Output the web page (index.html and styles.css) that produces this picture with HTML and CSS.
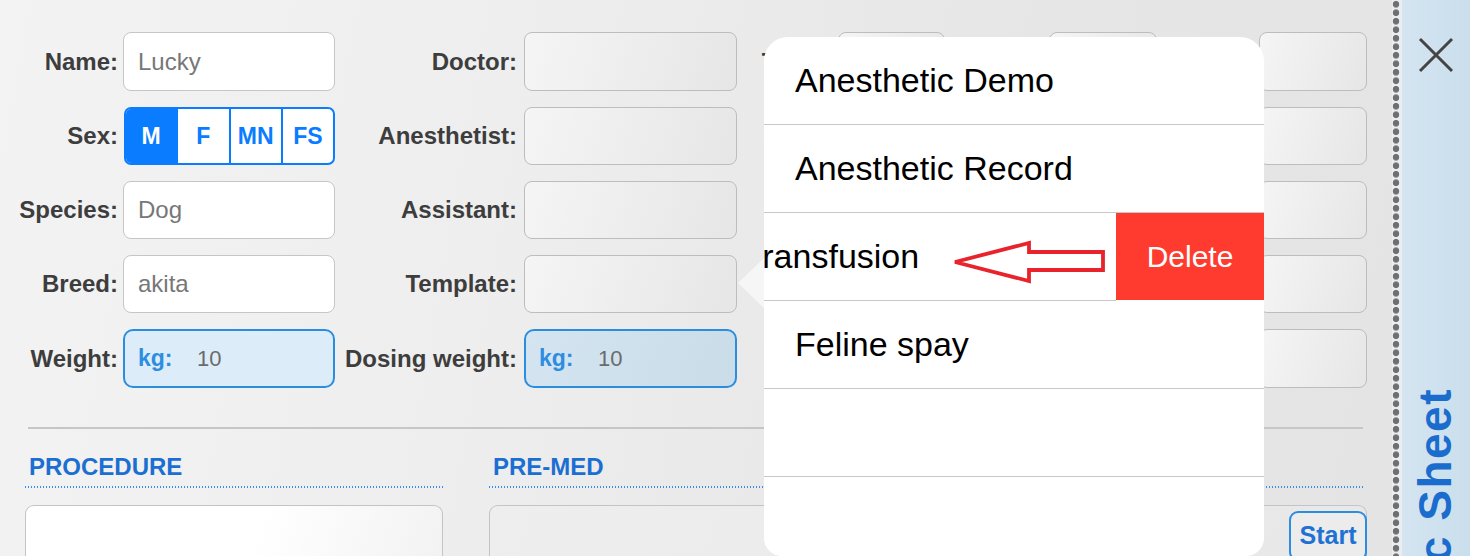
FILE: index.html
```html
<!DOCTYPE html>
<html lang="en">
<head>
<meta charset="utf-8">
<title>Anesthetic Sheet</title>
<link rel="stylesheet" href="styles.css">
</head>
<body>
<div class="app">
  <main class="sheet">
    <section class="form-grid">
      <div class="lbl c1">Name:</div>
      <div class="field white">Lucky</div>
      <div class="lbl c2">Doctor:</div>
      <div class="field gray"></div>
      <div class="lbl c3">Temp:</div>
      <div class="field gray"></div>
      <div class="lbl c4"></div>
      <div class="field gray"></div>
      <div class="lbl c5"></div>
      <div class="field gray"></div>

      <div class="lbl c1">Sex:</div>
      <div class="seg"><span class="on">M</span><span>F</span><span>MN</span><span>FS</span></div>
      <div class="lbl c2">Anesthetist:</div>
      <div class="field gray"></div>
      <div class="lbl c3"></div>
      <div class="field gray"></div>
      <div class="lbl c4"></div>
      <div class="field gray"></div>
      <div class="lbl c5"></div>
      <div class="field gray"></div>

      <div class="lbl c1">Species:</div>
      <div class="field white">Dog</div>
      <div class="lbl c2">Assistant:</div>
      <div class="field gray"></div>
      <div class="lbl c3"></div>
      <div class="field gray"></div>
      <div class="lbl c4"></div>
      <div class="field gray"></div>
      <div class="lbl c5"></div>
      <div class="field gray"></div>

      <div class="lbl c1">Breed:</div>
      <div class="field white">akita</div>
      <div class="lbl c2">Template:</div>
      <div class="field gray"></div>
      <div class="lbl c3"></div>
      <div class="field gray"></div>
      <div class="lbl c4"></div>
      <div class="field gray"></div>
      <div class="lbl c5"></div>
      <div class="field gray"></div>

      <div class="lbl c1">Weight:</div>
      <div class="field kg"><span class="unit">kg:</span><span class="val">10</span></div>
      <div class="lbl c2">Dosing weight:</div>
      <div class="field kg dose"><span class="unit">kg:</span><span class="val">10</span></div>
      <div class="lbl c3"></div>
      <div class="field gray"></div>
      <div class="lbl c4"></div>
      <div class="field gray"></div>
      <div class="lbl c5"></div>
      <div class="field gray"></div>
    </section>

    <hr class="divider">

    <section class="lower">
      <div class="panel procedure">
        <h2 class="panel-title">PROCEDURE</h2>
        <div class="box box-white"></div>
      </div>
      <div class="panel premed">
        <h2 class="panel-title">PRE-MED</h2>
        <div class="box box-gray"><button class="start">Start</button></div>
      </div>
    </section>
  </main>

  <aside class="sidebar">
    <div class="dots"></div>
    <div class="tab-content">
      <svg class="close" width="36" height="36" viewBox="0 0 36 36" aria-label="Close">
        <path d="M2 2 L34 34 M34 2 L2 34" stroke="#444" stroke-width="3" fill="none"/>
      </svg>
      <div class="tab-title">Anesthetic Sheet</div>
    </div>
  </aside>
</div>

<div class="popover">
  <div class="popover-arrow"></div>
  <div class="popover-list">
    <div class="row">Anesthetic Demo</div>
    <div class="row">Anesthetic Record</div>
    <div class="row swiped">
      <div class="row-content">Blood Transfusion</div>
      <div class="delete-action">Delete</div>
    </div>
    <div class="row">Feline spay</div>
    <div class="row"></div>
    <div class="row"></div>
  </div>
</div>

<svg class="annotation" width="156" height="46" viewBox="0 0 156 46">
  <polygon points="3,22 77,3 77,12 151,12 151,30 77,30 77,41" fill="none" stroke="#e8232b" stroke-width="3.8" stroke-linejoin="miter"/>
</svg>
</body>
</html>
```

FILE: styles.css
```css
* { box-sizing: border-box; }

html {
  margin: 0;
  padding: 0;
  width: 1470px;
  height: 556px;
  overflow: hidden;
}

body {
  margin: 0;
  padding: 0;
  width: 1470px;
  height: 556px;
  overflow: hidden;
  position: relative;
  font-family: "Liberation Sans", Arial, sans-serif;
  background: #ececec;
}

.app {
  display: flex;
  height: 556px;
  overflow: hidden;
}

.sheet {
  width: 1392px;
  flex: none;
  padding-top: 32px;
  overflow: hidden;
  background: linear-gradient(100deg, #f3f3f3 0%, #eeeeee 35%, #e6e6e6 70%, #e4e4e4 100%);
}

/* ---------- form grid ---------- */
.form-grid {
  display: grid;
  grid-template-columns: 123px 212px 189px 213px 101px 107px 104px 108px 102px 108px;
  grid-template-rows: 59px 58px 58px 58px 59px;
  row-gap: 16px;
}

.lbl {
  display: flex;
  align-items: center;
  justify-content: flex-end;
  padding-right: 5px;
  font-size: 24px;
  font-weight: bold;
  color: #3d3d3d;
  white-space: nowrap;
}
.lbl.c2 { padding-right: 7px; }
.lbl.c3, .lbl.c4, .lbl.c5 { padding-right: 6px; }

.field {
  display: flex;
  align-items: center;
  padding-left: 14px;
  border: 1px solid #c6c6c6;
  border-radius: 8px;
  font-size: 24px;
  color: #777777;
}
.field.white { background: #ffffff; }
.field.gray {
  background: linear-gradient(110deg, #f5f5f5 0%, #ececec 60%, #e6e6e6 100%);
  border-color: #bdbdbd;
}
.field.kg {
  background: #dcedf9;
  border: 2px solid #2b8de0;
  border-radius: 10px;
  padding-left: 13px;
}
.field.kg.dose {
  background: linear-gradient(110deg, #d4e5f1 0%, #c9dce8 100%);
}
.unit {
  width: 59px;
  font-size: 23px;
  font-weight: bold;
  color: #2d8ee0;
}
.val {
  font-size: 22px;
  color: #6b6b6b;
}

.seg {
  display: flex;
  border: 2px solid #0a7cff;
  border-radius: 7px;
  overflow: hidden;
  background: #ffffff;
  margin-left: 1px;
}
.seg span {
  flex: 1;
  display: flex;
  align-items: center;
  justify-content: center;
  font-size: 23px;
  font-weight: bold;
  color: #0a7cff;
}
.seg span + span { border-left: 2px solid #0a7cff; }
.seg span.on { background: #0a7cff; color: #ffffff; }

/* ---------- lower section ---------- */
.divider {
  margin: 39px 29px 0 28px;
  height: 2px;
  border: none;
  background: #c6c6c6;
}

.lower {
  display: flex;
  gap: 46px;
  padding-left: 25px;
  padding-right: 25px;
}
.panel { display: flex; flex-direction: column; }
.procedure { width: 418px; }
.premed { flex: 1; }

.panel-title {
  margin: 24px 0 0 0;
  padding: 0 0 7px 4px;
  font-size: 24px;
  line-height: 28px;
  font-weight: bold;
  color: #1b6fd1;
  background-image: linear-gradient(to right, #3a8ce6 1px, transparent 1px);
  background-size: 3px 2px;
  background-repeat: repeat-x;
  background-position: 0 100%;
}
.premed .panel-title { margin-right: 2px; }

.box {
  margin-top: 17px;
  height: 60px;
  border: 1px solid #c4c4c4;
  border-bottom: none;
  border-radius: 9px 9px 0 0;
  display: flex;
  justify-content: flex-end;
  align-items: flex-start;
}
.box-white { background: linear-gradient(110deg, #ffffff 55%, #f2f2f2 100%); }
.box-gray { background: linear-gradient(110deg, #eeeeee 0%, #e8e8e8 100%); }

.start {
  margin: 5px -1px 0 0;
  width: 78px;
  height: 50px;
  border: 2px solid #2b8de0;
  border-radius: 9px;
  background: #ececec;
  font-family: "Liberation Sans", Arial, sans-serif;
  font-size: 25px;
  font-weight: bold;
  color: #1f72d4;
  padding: 0 0 2px 0;
}

/* ---------- sidebar ---------- */
.sidebar {
  flex: 1;
  display: flex;
  overflow: hidden;
  background: linear-gradient(90deg, #d6e6f2 0%, #cadeec 100%);
}
.dots {
  width: 10px;
  flex: none;
  background-color: #e9eef2;
  background-image: radial-gradient(circle at 4px 50%, #6f6f6f 3px, rgba(111,111,111,0) 3.6px);
  background-size: 10px 8.5px;
}
.tab-content {
  flex: 1;
  display: flex;
  flex-direction: column;
  align-items: flex-start;
  padding: 37px 0 0 13px;
  overflow: hidden;
}
.close { display: block; flex: none; margin-left: 3px; }
.tab-title {
  flex: none;
  margin-top: 315px;
  writing-mode: vertical-rl;
  transform: rotate(180deg);
  font-size: 46px;
  line-height: 40px;
  letter-spacing: 1.5px;
  font-weight: bold;
  color: #1a6dcc;
  white-space: nowrap;
}

/* ---------- popover (overlay) ---------- */
.popover {
  position: absolute;
  left: 764px;
  top: 37px;
  width: 500px;
  height: 519px;
}
.popover-arrow {
  position: absolute;
  left: -26px;
  top: 221px;
  width: 0;
  height: 0;
  border-top: 25px solid transparent;
  border-bottom: 25px solid transparent;
  border-right: 26px solid rgba(250, 250, 250, 0.75);
}
.popover-list {
  height: 100%;
  background: #ffffff;
  border-radius: 24px 24px 18px 18px;
  overflow: hidden;
}
.row {
  height: 88px;
  border-bottom: 1px solid #c8c7cc;
  padding-left: 31px;
  font-size: 34px;
  line-height: 87px;
  color: #000000;
  white-space: nowrap;
}
.row:last-child { height: 79px; border-bottom: none; }
.row.swiped {
  position: relative;
  padding-left: 0;
  border-bottom: none;
  overflow: hidden;
}
.row-content {
  height: 88px;
  padding-left: 31px;
  border-bottom: 1px solid #c8c7cc;
  transform: translateX(-148px);
}
.delete-action {
  position: absolute;
  right: 0;
  top: 0;
  width: 148px;
  height: 87px;
  background: #ff3b30;
  color: #ffffff;
  font-size: 30px;
  line-height: 87px;
  text-align: center;
}

/* ---------- annotation arrow ---------- */
.annotation {
  position: absolute;
  left: 952px;
  top: 240px;
}
```
